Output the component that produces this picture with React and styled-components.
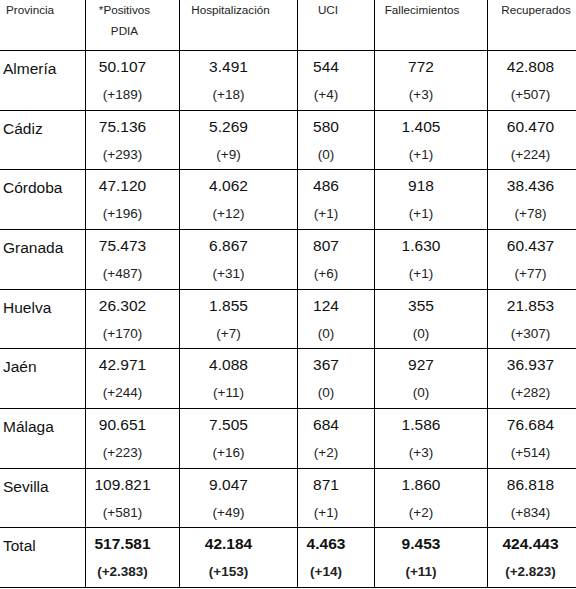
import React from 'react';
import styled, { createGlobalStyle } from 'styled-components';

const Global = createGlobalStyle`
  html, body {
    margin: 0;
    padding: 0;
    background: #fff;
    overflow: hidden;
  }
  body {
    font-family: "Liberation Sans", Arial, sans-serif;
  }
`;

const Table = styled.div`
  width: 576px;
  display: flex;
  flex-direction: column;
  background: #fff;
`;

const Row = styled.div`
  display: grid;
  grid-template-columns: 85px 94px 118px 77px 113px 89px;
  height: ${(p) => p.$h}px;
  box-sizing: border-box;
  border-bottom: 1px solid #000;
`;

const BaseCell = styled.div`
  box-sizing: border-box;
  min-width: 0;
  & + & {
    border-left: 1px solid #000;
  }
`;

const HeaderCell = styled(BaseCell)`
  display: flex;
  justify-content: ${(p) => (p.$left ? 'flex-start' : 'center')};
  padding-left: ${(p) => p.$pl || 0}px;
  padding-right: ${(p) => p.$pr || 0}px;
  color: #222;
  font-size: 11.7px;
`;

const HeaderText = styled.div`
  line-height: 21px;
  margin-top: -1.5px;
  text-align: center;
  white-space: nowrap;
`;

const LabelCell = styled(BaseCell)`
  padding: 8px 0 0 3px;
  font-size: 15.5px;
  line-height: 20px;
  color: #111;
`;

const DataCell = styled(BaseCell)`
  display: flex;
  flex-direction: column;
  align-items: center;
  padding-top: 6px;
  padding-right: ${(p) => p.$pr}px;
  font-weight: ${(p) => (p.$bold ? 700 : 400)};
`;

const Big = styled.div`
  font-size: 15.5px;
  line-height: 20px;
  color: #111;
  white-space: nowrap;
`;

const Small = styled.div`
  margin-top: 8px;
  font-size: 13.5px;
  line-height: 20px;
  color: #222;
  white-space: nowrap;
`;

const rows = [
  ['Almería', ['50.107', '+189'], ['3.491', '+18'], ['544', '+4'], ['772', '+3'], ['42.808', '+507']],
  ['Cádiz', ['75.136', '+293'], ['5.269', '+9'], ['580', '0'], ['1.405', '+1'], ['60.470', '+224']],
  ['Córdoba', ['47.120', '+196'], ['4.062', '+12'], ['486', '+1'], ['918', '+1'], ['38.436', '+78']],
  ['Granada', ['75.473', '+487'], ['6.867', '+31'], ['807', '+6'], ['1.630', '+1'], ['60.437', '+77']],
  ['Huelva', ['26.302', '+170'], ['1.855', '+7'], ['124', '0'], ['355', '0'], ['21.853', '+307']],
  ['Jaén', ['42.971', '+244'], ['4.088', '+11'], ['367', '0'], ['927', '0'], ['36.937', '+282']],
  ['Málaga', ['90.651', '+223'], ['7.505', '+16'], ['684', '+2'], ['1.586', '+3'], ['76.684', '+514']],
  ['Sevilla', ['109.821', '+581'], ['9.047', '+49'], ['871', '+1'], ['1.860', '+2'], ['86.818', '+834']],
];

const total = ['Total', ['517.581', '+2.383'], ['42.184', '+153'], ['4.463', '+14'], ['9.453', '+11'], ['424.443', '+2.823']];

const dataPad = [20, 20, 20, 20, 3];
const ROW_H = 59.67;

function DataRow({ row, bold }) {
  const [label, ...vals] = row;
  return (
    <Row $h={ROW_H}>
      <LabelCell>{label}</LabelCell>
      {vals.map(([v, d], i) => (
        <DataCell key={i} $pr={dataPad[i]} $bold={bold}>
          <Big>{v}</Big>
          <Small>({d})</Small>
        </DataCell>
      ))}
    </Row>
  );
}

export default function App() {
  return (
    <>
      <Global />
      <Table>
        <Row $h={51}>
          <HeaderCell $left $pl={6}>
            <HeaderText>Provincia</HeaderText>
          </HeaderCell>
          <HeaderCell $pr={16}>
            <HeaderText>
              *Positivos
              <br />
              PDIA
            </HeaderText>
          </HeaderCell>
          <HeaderCell $pr={16}>
            <HeaderText>Hospitalización</HeaderText>
          </HeaderCell>
          <HeaderCell $pr={16}>
            <HeaderText>UCI</HeaderText>
          </HeaderCell>
          <HeaderCell $pr={18}>
            <HeaderText>Fallecimientos</HeaderText>
          </HeaderCell>
          <HeaderCell $pl={8}>
            <HeaderText>Recuperados</HeaderText>
          </HeaderCell>
        </Row>
        {rows.map((r) => (
          <DataRow key={r[0]} row={r} />
        ))}
        <DataRow row={total} bold />
      </Table>
    </>
  );
}
